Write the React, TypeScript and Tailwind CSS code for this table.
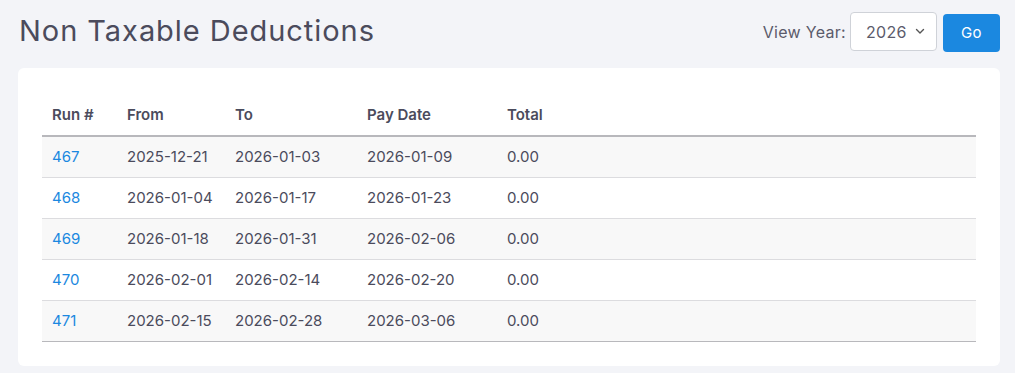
import React from 'react';

const runs = [
  { run: '467', from: '2025-12-21', to: '2026-01-03', pay: '2026-01-09', total: '0.00' },
  { run: '468', from: '2026-01-04', to: '2026-01-17', pay: '2026-01-23', total: '0.00' },
  { run: '469', from: '2026-01-18', to: '2026-01-31', pay: '2026-02-06', total: '0.00' },
  { run: '470', from: '2026-02-01', to: '2026-02-14', pay: '2026-02-20', total: '0.00' },
  { run: '471', from: '2026-02-15', to: '2026-02-28', pay: '2026-03-06', total: '0.00' },
];

export default function App() {
  return (
    <div
      className="min-h-screen bg-[#f3f4f8] pl-[18px] pr-[15px] pb-2 text-[#4b4b5c]"
      style={{ fontFamily: 'Inter, "Noto Sans", sans-serif' }}
    >
      {/* Header */}
      <div className="flex h-[68px] items-start justify-between">
        <h1 className="mt-[9px] pl-[1px] text-[29px] font-normal tracking-[0.95px] text-[#4b4b5c]">
          Non Taxable Deductions
        </h1>
        <div className="flex items-center pt-[11px]">
          <span className="mr-[4px] text-[16px] tracking-[0.3px] text-[#5b5b6b]">View Year:</span>
          <div className="relative flex h-[39px] w-[87px] items-center rounded-[4px] border border-[#cfd2d8] bg-white pl-[15px] text-[16px] tracking-[0.3px] text-[#5b5b6b]">
            2026
            <svg className="absolute right-[11px] top-[15px]" width="10" height="7" viewBox="0 0 10 7" fill="none">
              <path d="M1.5 1.5L5 5L8.5 1.5" stroke="#555" strokeWidth="1.4" strokeLinecap="round" strokeLinejoin="round" />
            </svg>
          </div>
          <button className="ml-[6px] mt-[3px] h-[38px] w-[57px] rounded-[4px] bg-[#1b88e0] text-[15px] tracking-[0.3px] text-white">
            Go
          </button>
        </div>
      </div>

      {/* Card */}
      <div className="rounded-[6px] bg-white p-6">
        <table className="w-full border-collapse text-left text-[15px]">
          <thead>
            <tr className="h-[44px] border-b-2 border-[#b8b8bc]">
              <th className="w-[75px] pl-[10px] pt-[3px] font-semibold">Run #</th>
              <th className="w-[108px] pl-[10px] pt-[3px] font-semibold">From</th>
              <th className="w-[132px] pl-[10px] pt-[3px] font-semibold">To</th>
              <th className="w-[140px] pl-[10px] pt-[3px] font-semibold">Pay Date</th>
              <th className="pl-[10px] pt-[3px] font-semibold">Total</th>
            </tr>
          </thead>
          <tbody>
            {runs.map((r, i) => (
              <tr
                key={r.run}
                className={`h-[41px] ${i === runs.length - 1 ? 'border-b border-[#b8b8bc]' : 'border-b border-[#dcdcdf]'} ${i % 2 === 0 ? 'bg-[#f8f8f8]' : 'bg-white'}`}
              >
                <td className="pl-[10px] pt-[1px]">
                  <a href="#" className="text-[#1b88e0]">{r.run}</a>
                </td>
                <td className="pl-[10px] pt-[1px]">{r.from}</td>
                <td className="pl-[10px] pt-[1px]">{r.to}</td>
                <td className="pl-[10px] pt-[1px]">{r.pay}</td>
                <td className="pl-[10px] pt-[1px]">{r.total}</td>
              </tr>
            ))}
          </tbody>
        </table>
      </div>
    </div>
  );
}
